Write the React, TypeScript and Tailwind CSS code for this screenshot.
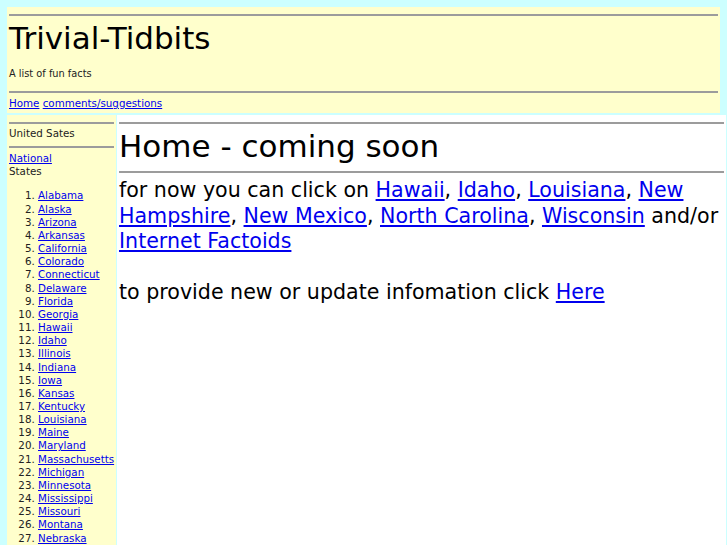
import React from 'react';

const states = [
  'Alabama', 'Alaska', 'Arizona', 'Arkansas', 'California', 'Colorado', 'Connecticut',
  'Delaware', 'Florida', 'Georgia', 'Hawaii', 'Idaho', 'Illinois', 'Indiana', 'Iowa',
  'Kansas', 'Kentucky', 'Louisiana', 'Maine', 'Maryland', 'Massachusetts', 'Michigan',
  'Minnesota', 'Mississippi', 'Missouri', 'Montana', 'Nebraska', 'Nevada', 'New Hampshire',
];

const Rule: React.FC<{ className?: string }> = ({ className = '' }) => (
  <div className={`h-[2px] bg-[#9c9c9c] ${className}`} />
);

const A: React.FC<{ children: React.ReactNode }> = ({ children }) => (
  <a href="#" className="text-[#0000ee] underline">{children}</a>
);

const App: React.FC = () => {
  return (
    <div className="min-h-screen h-[545px] overflow-hidden bg-[#ccffff] pt-[7px] pl-[7px] text-black font-['DejaVu_Sans','Verdana',sans-serif]">
      {/* header */}
      <header className="w-[713px] h-[106px] bg-[#ffffcc] pt-[7px] px-[2px]">
        <Rule />
        <div className="mt-[4px] text-[31px] leading-[37px]">Trivial-Tidbits</div>
        <div className="mt-[10px] text-[9.8px] leading-[13px] text-[#222]">A list of fun facts</div>
        <Rule className="mt-[11px]" />
        <div className="mt-[4px] text-[10.3px] leading-[13px]">
          <A>Home</A> <A>comments/suggestions</A>
        </div>
      </header>

      <div className="flex gap-[1px] mt-[2px]">
        {/* sidebar */}
        <aside className="w-[109px] shrink-0 h-[440px] bg-[#ffffcc] pt-[7px] px-[2px] text-[10.3px] leading-[13.15px] text-[#222]">
          <Rule />
          <div className="mt-[3px]">United Sates</div>
          <Rule className="mt-[6px]" />
          <div className="mt-[4px]"><A>National</A></div>
          <div>States</div>
          <ol className="list-decimal mt-[11px] pl-[29px]">
            {states.map(s => (
              <li key={s}><A>{s}</A></li>
            ))}
          </ol>
        </aside>

        {/* main */}
        <main className="w-[609px] shrink-0 h-[440px] bg-white pt-[7px] px-[2px]">
          <Rule />
          <h1 className="mt-[4px] text-[31px] leading-[37px]">Home - coming soon</h1>
          <Rule className="mt-[6px]" />
          <p className="mt-[5px] text-[20.6px] leading-[25.6px]">
            for now you can click on <A>Hawaii</A>, <A>Idaho</A>, <A>Louisiana</A>, <A>New Hampshire</A>, <A>New Mexico</A>, <A>North Carolina</A>, <A>Wisconsin</A> and/or <A>Internet Factoids</A>
            <br />
            <br />
            to provide new or update infomation click <A>Here</A>
          </p>
        </main>
      </div>
    </div>
  );
};

export default App;
